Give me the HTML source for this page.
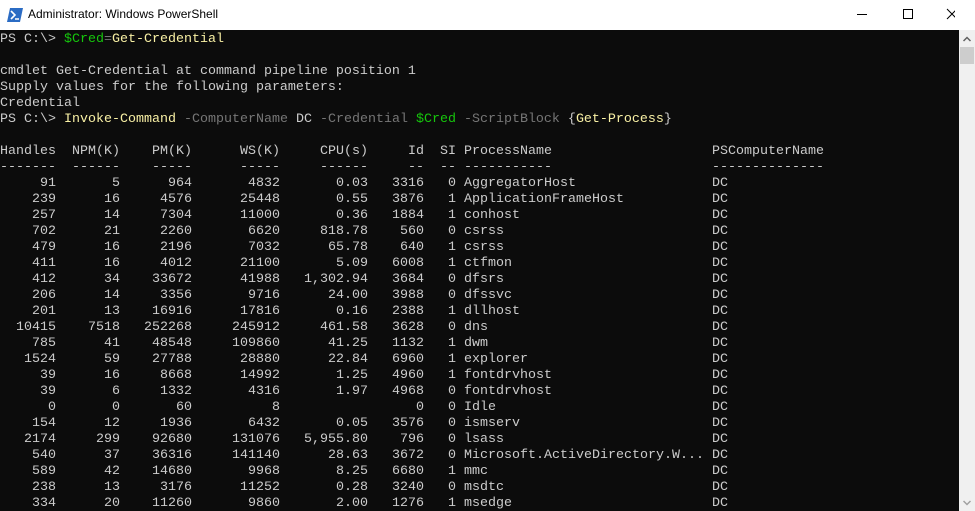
<!DOCTYPE html>
<html><head><meta charset="utf-8"><style>
*{margin:0;padding:0;box-sizing:border-box}
body{width:975px;height:511px;overflow:hidden;background:#fff;position:relative;font-family:"Liberation Sans",sans-serif}
.tb{position:absolute;left:0;top:0;width:975px;height:30px;background:#fff}
.tt{position:absolute;left:28px;top:7px;font-size:12px;color:#000}
.con{position:absolute;left:0;top:30px;width:959px;height:481px;background:#0c0c0c;color:#cccccc;font-family:"Liberation Mono",monospace;font-size:13.33px;line-height:16px;overflow:hidden;padding-top:2px}
.l{height:16px;white-space:pre}
.r{display:grid;grid-template-columns:56px 64px 72px 88px 88px 56px 32px 256px auto;height:16px}
.r i{font-style:normal;text-align:right;white-space:pre}
.r i:nth-child(8),.r i:nth-child(9){text-align:left}
.r i:nth-child(8){padding-left:8px}
.y{color:#f9f1a5}.g{color:#16c60c}.d{color:#767676}
.sb{position:absolute;left:959px;top:30px;width:16px;height:481px;background:#f0f0f0}
</style></head><body>
<div class="tb">
<svg style="position:absolute;left:7px;top:8px" width="16" height="14" viewBox="0 0 16 14"><polygon points="3,0 16,0 13,14 0,14" fill="#2b6cc4"/><polyline points="4,3 8,7 4,11" fill="none" stroke="#fff" stroke-width="1.6"/><line x1="8" y1="11" x2="12" y2="11" stroke="#fff" stroke-width="1.5"/></svg>
<div class="tt">Administrator: Windows PowerShell</div>
<svg style="position:absolute;left:855px;top:8px" width="100" height="14"><line x1="2" y1="6.5" x2="12" y2="6.5" stroke="#000"/><rect x="48.5" y="1.5" width="9" height="9" fill="none" stroke="#000"/><path d="M92 1 L102 11 M102 1 L92 11" stroke="#000"/></svg>
</div>
<div class="con">
<div class="l">PS C:\&gt; <span class="g">$Cred</span><span class="d">=</span><span class="y">Get-Credential</span></div>
<div class="l"></div>
<div class="l">cmdlet Get-Credential at command pipeline position 1</div>
<div class="l">Supply values for the following parameters:</div>
<div class="l">Credential</div>
<div class="l">PS C:\&gt; <span class="y">Invoke-Command</span> <span class="d">-ComputerName</span> DC <span class="d">-Credential</span> <span class="g">$Cred</span> <span class="d">-ScriptBlock</span> {<span class="y">Get-Process</span>}</div>
<div class="l"></div>
<div class="r"><i>Handles</i><i>NPM(K)</i><i>PM(K)</i><i>WS(K)</i><i>CPU(s)</i><i>Id</i><i>SI</i><i>ProcessName</i><i>PSComputerName</i></div>
<div class="r"><i>-------</i><i>------</i><i>-----</i><i>-----</i><i>------</i><i>--</i><i>--</i><i>-----------</i><i>--------------</i></div>
<div class="r"><i>91</i><i>5</i><i>964</i><i>4832</i><i>0.03</i><i>3316</i><i>0</i><i>AggregatorHost</i><i>DC</i></div>
<div class="r"><i>239</i><i>16</i><i>4576</i><i>25448</i><i>0.55</i><i>3876</i><i>1</i><i>ApplicationFrameHost</i><i>DC</i></div>
<div class="r"><i>257</i><i>14</i><i>7304</i><i>11000</i><i>0.36</i><i>1884</i><i>1</i><i>conhost</i><i>DC</i></div>
<div class="r"><i>702</i><i>21</i><i>2260</i><i>6620</i><i>818.78</i><i>560</i><i>0</i><i>csrss</i><i>DC</i></div>
<div class="r"><i>479</i><i>16</i><i>2196</i><i>7032</i><i>65.78</i><i>640</i><i>1</i><i>csrss</i><i>DC</i></div>
<div class="r"><i>411</i><i>16</i><i>4012</i><i>21100</i><i>5.09</i><i>6008</i><i>1</i><i>ctfmon</i><i>DC</i></div>
<div class="r"><i>412</i><i>34</i><i>33672</i><i>41988</i><i>1,302.94</i><i>3684</i><i>0</i><i>dfsrs</i><i>DC</i></div>
<div class="r"><i>206</i><i>14</i><i>3356</i><i>9716</i><i>24.00</i><i>3988</i><i>0</i><i>dfssvc</i><i>DC</i></div>
<div class="r"><i>201</i><i>13</i><i>16916</i><i>17816</i><i>0.16</i><i>2388</i><i>1</i><i>dllhost</i><i>DC</i></div>
<div class="r"><i>10415</i><i>7518</i><i>252268</i><i>245912</i><i>461.58</i><i>3628</i><i>0</i><i>dns</i><i>DC</i></div>
<div class="r"><i>785</i><i>41</i><i>48548</i><i>109860</i><i>41.25</i><i>1132</i><i>1</i><i>dwm</i><i>DC</i></div>
<div class="r"><i>1524</i><i>59</i><i>27788</i><i>28880</i><i>22.84</i><i>6960</i><i>1</i><i>explorer</i><i>DC</i></div>
<div class="r"><i>39</i><i>16</i><i>8668</i><i>14992</i><i>1.25</i><i>4960</i><i>1</i><i>fontdrvhost</i><i>DC</i></div>
<div class="r"><i>39</i><i>6</i><i>1332</i><i>4316</i><i>1.97</i><i>4968</i><i>0</i><i>fontdrvhost</i><i>DC</i></div>
<div class="r"><i>0</i><i>0</i><i>60</i><i>8</i><i></i><i>0</i><i>0</i><i>Idle</i><i>DC</i></div>
<div class="r"><i>154</i><i>12</i><i>1936</i><i>6432</i><i>0.05</i><i>3576</i><i>0</i><i>ismserv</i><i>DC</i></div>
<div class="r"><i>2174</i><i>299</i><i>92680</i><i>131076</i><i>5,955.80</i><i>796</i><i>0</i><i>lsass</i><i>DC</i></div>
<div class="r"><i>540</i><i>37</i><i>36316</i><i>141140</i><i>28.63</i><i>3672</i><i>0</i><i>Microsoft.ActiveDirectory.W...</i><i>DC</i></div>
<div class="r"><i>589</i><i>42</i><i>14680</i><i>9968</i><i>8.25</i><i>6680</i><i>1</i><i>mmc</i><i>DC</i></div>
<div class="r"><i>238</i><i>13</i><i>3176</i><i>11252</i><i>0.28</i><i>3240</i><i>0</i><i>msdtc</i><i>DC</i></div>
<div class="r"><i>334</i><i>20</i><i>11260</i><i>9860</i><i>2.00</i><i>1276</i><i>1</i><i>msedge</i><i>DC</i></div>
</div>
<div class="sb">
<svg style="position:absolute;left:4px;top:6px" width="8" height="6"><polyline points="0.5,5 4,1.5 7.5,5" fill="none" stroke="#606060" stroke-width="1.5"/></svg>
<div style="position:absolute;left:1px;top:17px;width:14px;height:17px;background:#cdcdcd"></div>
<svg style="position:absolute;left:4px;top:470px" width="8" height="6"><polyline points="0.5,1 4,4.5 7.5,1" fill="none" stroke="#a0a0a0" stroke-width="1.5"/></svg>
</div>
</body></html>
